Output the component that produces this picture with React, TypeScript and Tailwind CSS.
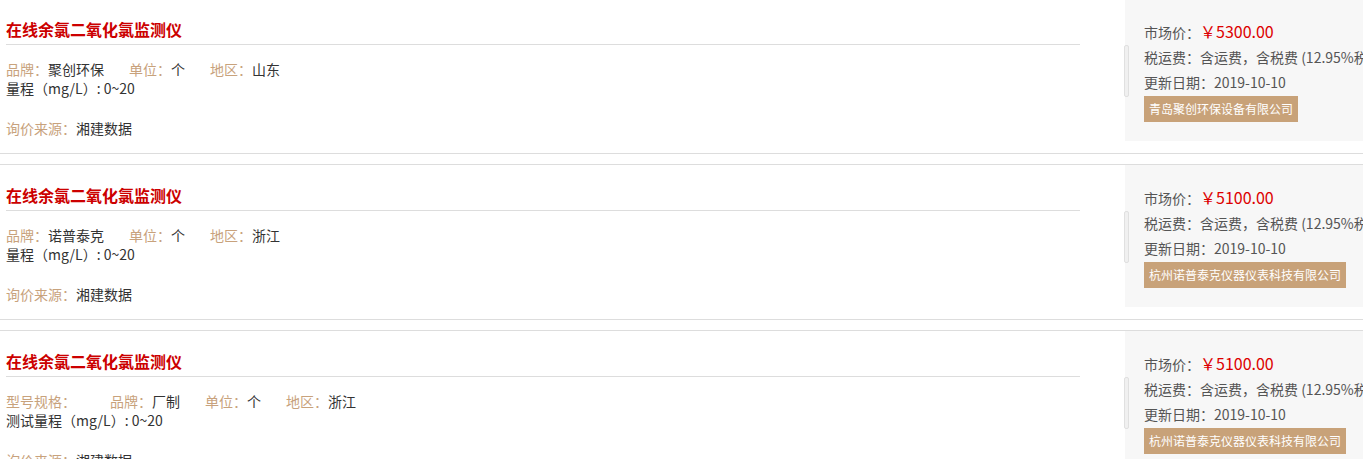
const items = [
  {
    title: '在线余氯二氧化氯监测仪',
    specs: [
      { label: '品牌：', value: '聚创环保' },
      { label: '单位：', value: '个' },
      { label: '地区：', value: '山东' },
    ],
    range: '量程（mg/L）: 0~20',
    price: '5300.00',
    date: '2019-10-10',
    company: '青岛聚创环保设备有限公司',
  },
  {
    title: '在线余氯二氧化氯监测仪',
    specs: [
      { label: '品牌：', value: '诺普泰克' },
      { label: '单位：', value: '个' },
      { label: '地区：', value: '浙江' },
    ],
    range: '量程（mg/L）: 0~20',
    price: '5100.00',
    date: '2019-10-10',
    company: '杭州诺普泰克仪器仪表科技有限公司',
  },
  {
    title: '在线余氯二氧化氯监测仪',
    specs: [
      { label: '型号规格：', value: '' },
      { label: '品牌：', value: '厂制' },
      { label: '单位：', value: '个' },
      { label: '地区：', value: '浙江' },
    ],
    range: '测试量程（mg/L）: 0~20',
    price: '5100.00',
    date: '2019-10-10',
    company: '杭州诺普泰克仪器仪表科技有限公司',
  },
];

function PriceRow({ item }: { item: (typeof items)[number] }) {
  return (
    <li className="mb-[10px] flex h-[156px] border-y border-[#dddddd]">
      {/* left: product info */}
      <div className="ml-[6px] w-[1074px] shrink-0">
        <h3 className="border-b border-[#dddddd] pt-[18px] pb-[3px] text-[16px] font-bold leading-[24px] text-[#cc0000]">
          {item.title}
        </h3>
        <p className="mt-[15px] whitespace-nowrap text-[14px] leading-[19px]">
          {item.specs.map((s) => (
            <span key={s.label} className="mr-[25px]">
              <span className="text-[#c8a27c]">{s.label}</span>
              {s.value ? (
                <span className="text-[#333333]">{s.value}</span>
              ) : (
                <span className="inline-block w-[9px]" />
              )}
            </span>
          ))}
        </p>
        <p className="text-[14px] leading-[19px] text-[#333333]">{item.range}</p>
        <p className="mt-[21px] text-[14px] leading-[19px]">
          <span className="text-[#c8a27c]">询价来源：</span>
          <span className="text-[#333333]">湘建数据</span>
        </p>
      </div>

      {/* right: price panel */}
      <div className="ml-[45px] flex h-[142px] w-[300px] shrink-0 bg-[#f7f7f7]">
        <div className="mt-[46px] -ml-px h-[52px] w-[5px] rounded-[2px] border border-[#e0e0e0] bg-[#f0f0f0]" />
        <div className="ml-[15px] pt-[20px] text-[14px] leading-[25px] text-[#555555] whitespace-nowrap">
          <p>
            市场价：<span className="text-[16px] text-[#dd0000]">￥{item.price}</span>
          </p>
          <p>税运费：含运费，含税费 (12.95%税率)</p>
          <p>更新日期：{item.date}</p>
          <span className="mt-px inline-block bg-[#c8a279] px-[5px] text-[12px] leading-[26px] text-white">
            {item.company}
          </span>
        </div>
      </div>
    </li>
  );
}

export default function App() {
  return (
    <div
      className="min-h-[459px] overflow-hidden bg-white"
      style={{ fontFamily: '"Noto Sans CJK SC", "Microsoft YaHei", sans-serif' }}
    >
      <ul className="-mt-[2px] w-[1430px]">
        {items.map((item, i) => (
          <PriceRow key={i} item={item} />
        ))}
      </ul>
    </div>
  );
}
